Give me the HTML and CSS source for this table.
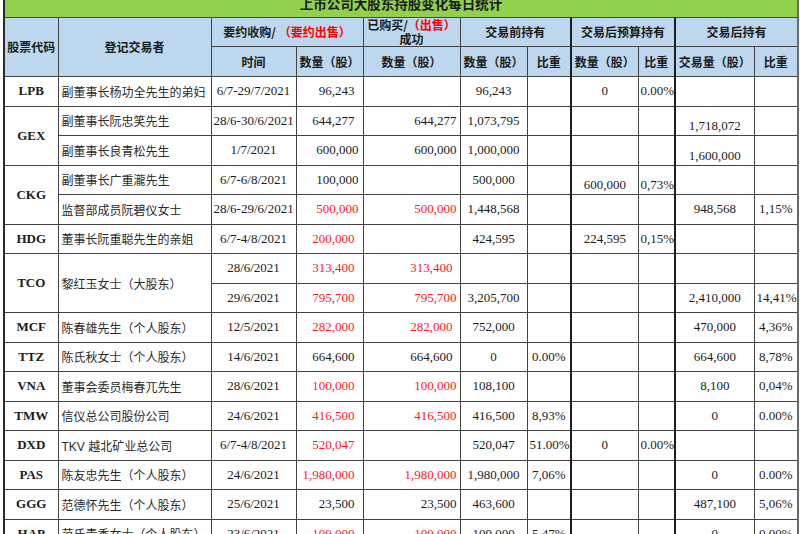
FILE: index.html
```html
<!DOCTYPE html>
<html lang="zh">
<head>
<meta charset="utf-8">
<title>上市公司大股东持股变化每日统计</title>
<link rel="stylesheet" href="styles.css">
</head>
<body>
<table class="sheet">
  <colgroup>
    <col class="w-code"><col class="w-name"><col class="w-time"><col class="w-qty">
    <col class="w-done"><col class="w-pre"><col class="w-pct"><col class="w-bud">
    <col class="w-pct2"><col class="w-post"><col class="w-pct3">
  </colgroup>
  <thead>
    <tr class="title-row"><th colspan="11" class="title">上市公司大股东持股变化每日统计</th></tr>
    <tr class="h1">
      <th rowspan="2">股票代码</th>
      <th rowspan="2">登记交易者</th>
      <th colspan="2">要约收购/ <span class="r">（要约出售）</span></th>
      <th class="wrap"><span class="ln">已购买/<span class="r">（出售）</span></span><span class="ln">成功</span></th>
      <th colspan="2">交易前持有</th>
      <th colspan="2" class="tk">交易后预算持有</th>
      <th colspan="2" class="tk">交易后持有</th>
    </tr>
    <tr class="h2">
      <th>时间</th>
      <th>数量（股）</th>
      <th>数量（股）</th>
      <th>数量（股）</th>
      <th>比重</th>
      <th class="tk">数量（股）</th>
      <th>比重</th>
      <th class="tk">交易量（股）</th>
      <th>比重</th>
    </tr>
  </thead>
  <tbody>
    <tr>
      <td class="code">LPB</td><td class="name">副董事长杨功全先生的弟妇</td><td class="c">6/7-29/7/2021</td>
      <td class="rt">96,243</td><td class="rt2"></td><td class="c">96,243</td><td class="c"></td>
      <td class="c tk">0</td><td class="c">0.00%</td><td class="c tk"></td><td class="c"></td>
    </tr>
    <tr>
      <td class="code" rowspan="2">GEX</td><td class="name">副董事长阮忠笑先生</td><td class="c">28/6-30/6/2021</td>
      <td class="rt">644,277</td><td class="rt2">644,277</td><td class="c">1,073,795</td><td class="c"></td>
      <td class="c tk"></td><td class="c"></td><td class="c tk b">1,718,072</td><td class="c"></td>
    </tr>
    <tr>
      <td class="name">副董事长良青松先生</td><td class="c">1/7/2021</td>
      <td class="rt n4">600,000</td><td class="rt2">600,000</td><td class="c">1,000,000</td><td class="c"></td>
      <td class="c tk"></td><td class="c"></td><td class="c tk b">1,600,000</td><td class="c"></td>
    </tr>
    <tr>
      <td class="code" rowspan="2">CKG</td><td class="name">副董事长广重瀧先生</td><td class="c">6/7-6/8/2021</td>
      <td class="rt n4">100,000</td><td class="rt2"></td><td class="c">500,000</td><td class="c"></td>
      <td class="c tk b">600,000</td><td class="c b">0,73%</td><td class="c tk"></td><td class="c"></td>
    </tr>
    <tr>
      <td class="name">监督部成员阮碧仪女士</td><td class="c">28/6-29/6/2021</td>
      <td class="rt n4 r">500,000</td><td class="rt2 r">500,000</td><td class="c">1,448,568</td><td class="c"></td>
      <td class="c tk"></td><td class="c"></td><td class="c tk">948,568</td><td class="c">1,15%</td>
    </tr>
    <tr>
      <td class="code">HDG</td><td class="name">董事长阮重聪先生的亲姐</td><td class="c">6/7-4/8/2021</td>
      <td class="rt r">200,000</td><td class="rt2"></td><td class="c">424,595</td><td class="c"></td>
      <td class="c tk">224,595</td><td class="c">0,15%</td><td class="c tk"></td><td class="c"></td>
    </tr>
    <tr>
      <td class="code" rowspan="2">TCO</td><td class="name" rowspan="2">黎红玉女士（大股东）</td><td class="c">28/6/2021</td>
      <td class="rt r">313,400</td><td class="rt2 n7 r">313,400</td><td class="c"></td><td class="c"></td>
      <td class="c tk"></td><td class="c"></td><td class="c tk"></td><td class="c"></td>
    </tr>
    <tr>
      <td class="c">29/6/2021</td>
      <td class="rt r">795,700</td><td class="rt2 r">795,700</td><td class="c">3,205,700</td><td class="c"></td>
      <td class="c tk"></td><td class="c"></td><td class="c tk">2,410,000</td><td class="c">14,41%</td>
    </tr>
    <tr>
      <td class="code">MCF</td><td class="name">陈春雄先生（个人股东）</td><td class="c">12/5/2021</td>
      <td class="rt r">282,000</td><td class="rt2 n7 r">282,000</td><td class="c">752,000</td><td class="c"></td>
      <td class="c tk"></td><td class="c"></td><td class="c tk">470,000</td><td class="c">4,36%</td>
    </tr>
    <tr>
      <td class="code">TTZ</td><td class="name">陈氏秋女士（个人股东）</td><td class="c">14/6/2021</td>
      <td class="rt">664,600</td><td class="rt2 n7">664,600</td><td class="c">0</td><td class="c">0.00%</td>
      <td class="c tk"></td><td class="c"></td><td class="c tk">664,600</td><td class="c">8,78%</td>
    </tr>
    <tr>
      <td class="code">VNA</td><td class="name">董事会委员梅春兀先生</td><td class="c">28/6/2021</td>
      <td class="rt r">100,000</td><td class="rt2 r">100,000</td><td class="c">108,100</td><td class="c"></td>
      <td class="c tk"></td><td class="c"></td><td class="c tk">8,100</td><td class="c">0,04%</td>
    </tr>
    <tr>
      <td class="code">TMW</td><td class="name">信仪总公司股份公司</td><td class="c">24/6/2021</td>
      <td class="rt r">416,500</td><td class="rt2 r">416,500</td><td class="c">416,500</td><td class="c">8,93%</td>
      <td class="c tk"></td><td class="c"></td><td class="c tk">0</td><td class="c">0.00%</td>
    </tr>
    <tr>
      <td class="code">DXD</td><td class="name">TKV 越北矿业总公司</td><td class="c">6/7-4/8/2021</td>
      <td class="rt r">520,047</td><td class="rt2"></td><td class="c">520,047</td><td class="c">51.00%</td>
      <td class="c tk">0</td><td class="c">0.00%</td><td class="c tk"></td><td class="c"></td>
    </tr>
    <tr>
      <td class="code">PAS</td><td class="name">陈友忠先生（个人股东）</td><td class="c">24/6/2021</td>
      <td class="rt r">1,980,000</td><td class="rt2 r">1,980,000</td><td class="c">1,980,000</td><td class="c">7,06%</td>
      <td class="c tk"></td><td class="c"></td><td class="c tk">0</td><td class="c">0.00%</td>
    </tr>
    <tr>
      <td class="code">GGG</td><td class="name">范德怀先生（个人股东）</td><td class="c">25/6/2021</td>
      <td class="rt">23,500</td><td class="rt2">23,500</td><td class="c">463,600</td><td class="c"></td>
      <td class="c tk"></td><td class="c"></td><td class="c tk">487,100</td><td class="c">5,06%</td>
    </tr>
    <tr>
      <td class="code">HAP</td><td class="name">范氏青香女士（个人股东）</td><td class="c">23/6/2021</td>
      <td class="rt r">109,000</td><td class="rt2 r">109,000</td><td class="c">109,000</td><td class="c">5,47%</td>
      <td class="c tk"></td><td class="c"></td><td class="c tk">0</td><td class="c">0.00%</td>
    </tr>
  </tbody>
</table>
</body>
</html>
```

FILE: styles.css
```css
html, body {
  margin: 0;
  padding: 0;
  background: #ffffff;
  overflow: hidden;
}

.sheet {
  border-collapse: collapse;
  table-layout: fixed;
  width: 794px;
  margin: -12px 0 0 3px;
  border-left: 2px solid #2a2a2a;
  border-right: 2px solid #6a6a6a;
  color: #1c1c1c;
}

.w-code { width: 54px; }
.w-name { width: 153px; }
.w-time { width: 85px; }
.w-qty { width: 67px; }
.w-done { width: 97px; }
.w-pre { width: 67px; }
.w-pct { width: 44px; }
.w-bud { width: 67px; }
.w-pct2 { width: 37px; }
.w-post { width: 79px; }
.w-pct3 { width: 44px; }

.sheet th,
.sheet td {
  border: 1px solid #444444;
  padding: 0 2px;
  overflow: hidden;
  white-space: nowrap;
}

.sheet th {
  background: #bdd7ee;
  font-family: "Noto Sans CJK SC", "Liberation Sans", sans-serif;
  font-weight: bold;
  font-size: 12px;
  line-height: 14px;
  text-align: center;
  vertical-align: middle;
  color: #1a1a1a;
}

.sheet th.title {
  background: #92d050;
  font-size: 13.5px;
  line-height: 16px;
}

.title-row { height: 29px; }
.h1 { height: 29px; }
.h2 { height: 30px; }

.sheet th.wrap {
  padding: 0 1px;
}

.ln {
  display: block;
  text-align: center;
  line-height: 14px;
}

.sheet tbody tr { height: 29.5px; }

.sheet td {
  font-family: "Liberation Serif", "Noto Sans CJK SC", serif;
  font-size: 13px;
  vertical-align: middle;
}

.sheet td.code {
  text-align: center;
  font-weight: bold;
}

.sheet td.name {
  font-family: "Liberation Sans", "Noto Sans CJK SC", sans-serif;
  font-size: 12px;
  text-align: left;
  padding-left: 3px;
  color: #2a2a2a;
}

.sheet td.c { text-align: center; }

.sheet td.rt {
  text-align: right;
  padding-right: 8px;
}

.sheet td.rt.n4 { padding-right: 4px; }

.sheet td.rt2 {
  text-align: right;
  padding-right: 3px;
}

.sheet td.rt2.n7 { padding-right: 7px; }

.sheet td.b {
  vertical-align: bottom;
  padding-bottom: 1px;
}

.sheet .tk { border-left: 2px solid #1e1e1e; }

.r { color: #ff0000; }
.sheet td.r { color: #ff1a1a; }
```
